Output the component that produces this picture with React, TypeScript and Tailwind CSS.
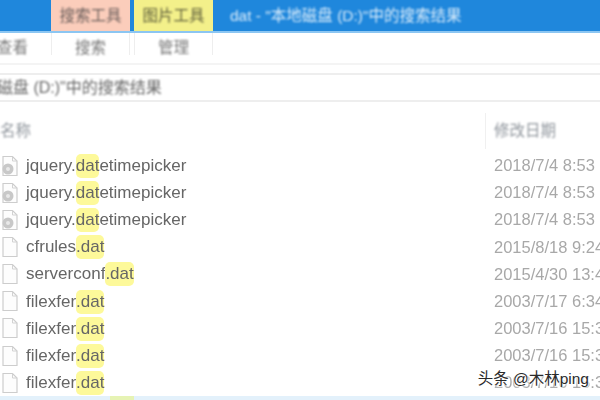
const files = [
  { before: "jquery.", match: "dat", after: "etimepicker", date: "2018/7/4 8:53", kind: "script" },
  { before: "jquery.", match: "dat", after: "etimepicker", date: "2018/7/4 8:53", kind: "script" },
  { before: "jquery.", match: "dat", after: "etimepicker", date: "2018/7/4 8:53", kind: "script" },
  { before: "cfrules", match: ".dat", after: "", date: "2015/8/18 9:24", kind: "file" },
  { before: "serverconf", match: ".dat", after: "", date: "2015/4/30 13:49", kind: "file" },
  { before: "filexfer", match: ".dat", after: "", date: "2003/7/17 6:34", kind: "file" },
  { before: "filexfer", match: ".dat", after: "", date: "2003/7/16 15:30", kind: "file" },
  { before: "filexfer", match: ".dat", after: "", date: "2003/7/16 15:30", kind: "file" },
  { before: "filexfer", match: ".dat", after: "", date: "2003/7/16 15:30", kind: "file" },
];

function FileIcon({ kind }: { kind: string }) {
  return (
    <svg width="18" height="22" viewBox="0 0 18 22" fill="none" className="blur-[0.7px]">
      <path d="M2 1.500h9.500L16 6v14.500H2z" fill="#fdfdfd" stroke="#cdcdcd" strokeWidth="1.2" />
      <path d="M11.500 1.500V6H16" stroke="#d2d2d2" strokeWidth="1" />
      {kind === "script" && (
        <>
          <circle cx="7" cy="14" r="5.500" fill="#c8c8c8" />
          <circle cx="7" cy="14" r="2" fill="#e8e8e8" />
        </>
      )}
    </svg>
  );
}

export default function App() {
  return (
    <div
      className="relative w-[600px] h-[400px] overflow-hidden bg-white flex flex-col"
      style={{ fontFamily: '"Liberation Sans", "Noto Sans CJK SC", sans-serif' }}
    >
      {/* title bar */}
      <div className="h-[33px] shrink-0 bg-[#1f87dc] flex border-b-2 border-[#8cc6f2]">
        <div className="w-[51px]" />
        <div className="w-[79px] bg-[#fbcdbb] flex items-center justify-center text-[15.5px] text-[#6b5f5c]">
          <span className="blur-[0.8px]">搜索工具</span>
        </div>
        <div className="w-[4px]" />
        <div className="w-[79px] bg-[#f3f08a] flex items-center justify-center text-[15.5px] text-[#5f5f3c]">
          <span className="blur-[0.8px]">图片工具</span>
        </div>
        <div className="pl-[17px] flex items-center text-[15.5px] text-[#dcedfb] whitespace-nowrap">
          <span className="blur-[0.8px]">dat - "本地磁盘 (D:)"中的搜索结果</span>
        </div>
      </div>

      {/* ribbon tabs */}
      <div className="h-[32px] shrink-0 flex border-b-2 border-[#f4f4f4] text-[15.5px] text-[#777777]">
        <div className="w-[51px] flex items-center justify-end pr-[23px] whitespace-nowrap overflow-hidden">
          <span className="blur-[0.8px]">查看</span>
        </div>
        <div className="w-[79px] mb-[8px] flex items-center justify-center border-x border-[#eeeeee]">
          <span className="blur-[0.8px] mt-[8px]">搜索</span>
        </div>
        <div className="w-[4px]" />
        <div className="w-[79px] mb-[8px] flex items-center justify-center border-x border-[#eeeeee]">
          <span className="blur-[0.8px] mt-[8px]">管理</span>
        </div>
      </div>

      {/* address bar */}
      <div className="mt-[8px] h-[29px] shrink-0 flex items-center border-y-2 border-[#eeeeee] text-[16px] text-[#666666] whitespace-nowrap">
        <span className="-ml-[3px] blur-[0.8px]">磁盘 (D:)"中的搜索结果</span>
      </div>

      {/* column headers */}
      <div className="mt-[11px] h-[36px] shrink-0 flex items-center text-[15.5px] text-[#8f959c]">
        <div className="w-[485px] blur-[0.8px]">名称</div>
        <div className="h-full border-l border-[#f0f0f0] pl-[8px] flex items-center">
          <span className="blur-[0.8px]">修改日期</span>
        </div>
      </div>

      {/* results */}
      <div className="mt-[3px] flex flex-col">
        {files.map((f, i) => (
          <div key={i} className="h-[27.15px] shrink-0 flex items-center whitespace-nowrap">
            <div className="w-[26px] pl-[1px] shrink-0 flex items-center">
              <FileIcon kind={f.kind} />
            </div>
            <div className="w-[468px] shrink-0 text-[17px] text-[#666666] blur-[0.7px]">
              {f.before}
              <span className="inline-block bg-[#fdf99a] rounded-[5px] leading-[24px]">{f.match}</span>
              {f.after}
            </div>
            <div className="text-[16.5px] text-[#a8a8a8] blur-[0.7px]">{f.date}</div>
          </div>
        ))}
      </div>

      {/* selected row peeking in at the bottom */}
      <div className="h-[6px] shrink-0 bg-[#e3f1fb] flex">
        <div className="ml-[110px] w-[24px] bg-[#e6f3b4]" />
      </div>

      {/* watermark */}
      <div className="absolute right-[11px] bottom-[11px] text-[15.5px] leading-[20px] text-[#2a2a2a] whitespace-nowrap [text-shadow:0_0_2px_#ffffff,0_0_3px_#ffffff,0_0_4px_#ffffff,0_0_4px_#ffffff]">
        头条 @木林ping
      </div>
    </div>
  );
}
